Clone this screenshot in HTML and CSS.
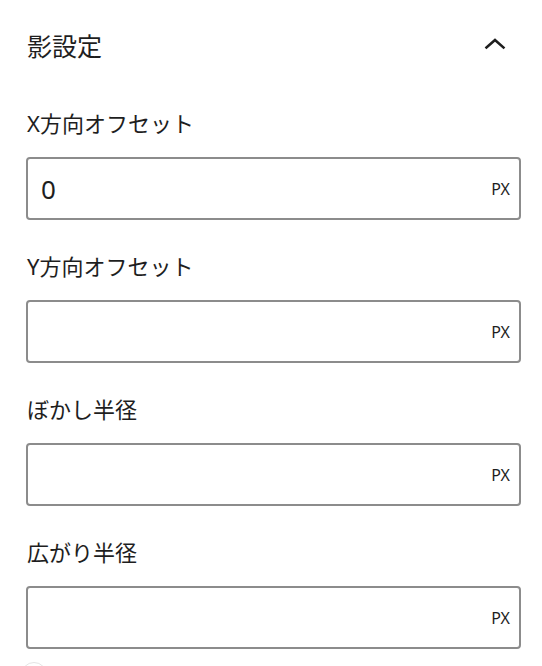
FILE: index.html
```html
<!DOCTYPE html>
<html lang="ja">
<head>
<meta charset="utf-8">
<link rel="stylesheet" href="styles.css">
</head>
<body>
<div class="panel">
  <div class="panel-head">
    <h2 class="panel-title">影設定</h2>
    <svg class="chevron" width="24" height="24" viewBox="0 0 24 24"><path d="M3.5 15.5 L12 8 L20.5 15.5" fill="none" stroke="#1e1e1e" stroke-width="2.6" stroke-linecap="square"/></svg>
  </div>
  <div class="fields">
    <div class="field">
      <label class="field-label">X方向オフセット</label>
      <div class="input-box"><span class="value">0</span><span class="unit">PX</span></div>
    </div>
    <div class="field">
      <label class="field-label">Y方向オフセット</label>
      <div class="input-box"><span class="value"></span><span class="unit">PX</span></div>
    </div>
    <div class="field">
      <label class="field-label">ぼかし半径</label>
      <div class="input-box"><span class="value"></span><span class="unit">PX</span></div>
    </div>
    <div class="field">
      <label class="field-label">広がり半径</label>
      <div class="input-box"><span class="value"></span><span class="unit">PX</span></div>
    </div>
  </div>
  <div class="toggle"></div>
</div>
</body>
</html>
```
FILE: styles.css
```css
html, body {
  margin: 0;
  padding: 0;
  background: #ffffff;
}
body {
  font-family: "Noto Sans", "Noto Sans CJK JP", sans-serif;
  color: #1e1e1e;
  width: 542px;
  height: 666px;
  overflow: hidden;
}
.panel {
  padding: 30px 21px 0 26px;
}
.panel-head {
  display: flex;
  align-items: center;
  justify-content: space-between;
  height: 32px;
}
.panel-title {
  margin: 0 0 0 1px;
  font-size: 25px;
  font-weight: 400;
  line-height: 32px;
}
.chevron {
  margin-right: 14px;
  margin-top: -4px;
}
.fields {
  display: flex;
  flex-direction: column;
  gap: 35px;
  margin-top: 50px;
}
.field {
  display: flex;
  flex-direction: column;
  gap: 23px;
}
.field-label {
  display: block;
  font-size: 22px;
  line-height: 22px;
  padding-left: 1px;
}
.input-box {
  box-sizing: border-box;
  height: 63px;
  border: 2px solid #8c8c8c;
  border-radius: 4px;
  display: flex;
  align-items: center;
  justify-content: space-between;
  padding: 0 9px 0 13px;
}
.value {
  font-size: 26px;
  line-height: 30px;
}
.unit {
  font-size: 16px;
  line-height: 18px;
}
.toggle {
  margin-top: 13px;
  margin-left: -5px;
  width: 26px;
  height: 26px;
  border-radius: 50%;
  border: 1px solid #e4e4e4;
  box-sizing: border-box;
}
```
